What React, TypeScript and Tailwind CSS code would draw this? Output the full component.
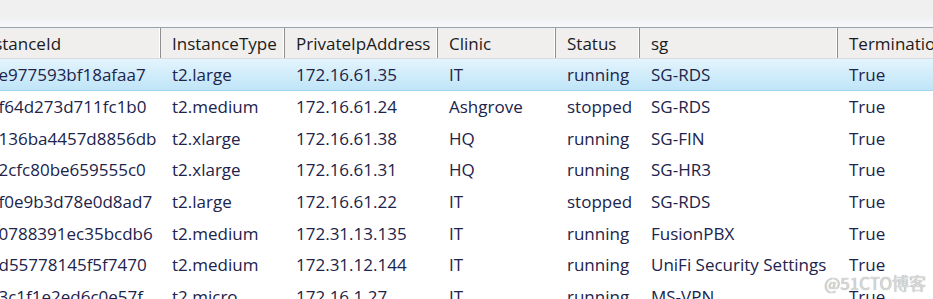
import React from 'react'

const COLS = ['InstanceId', 'InstanceType', 'PrivateIpAddress', 'Clinic', 'Status', 'sg', 'TerminationProtection']

const ROWS = [
  ['i-0e977593bf18afaa7', 't2.large', '172.16.61.35', 'IT', 'running', 'SG-RDS', 'True'],
  ['i-0f64d273d711fc1b0', 't2.medium', '172.16.61.24', 'Ashgrove', 'stopped', 'SG-RDS', 'True'],
  ['i-0136ba4457d8856db', 't2.xlarge', '172.16.61.38', 'HQ', 'running', 'SG-FIN', 'True'],
  ['i-02cfc80be659555c0', 't2.xlarge', '172.16.61.31', 'HQ', 'running', 'SG-HR3', 'True'],
  ['i-0f0e9b3d78e0d8ad7', 't2.large', '172.16.61.22', 'IT', 'stopped', 'SG-RDS', 'True'],
  ['i-00788391ec35bcdb6', 't2.medium', '172.31.13.135', 'IT', 'running', 'FusionPBX', 'True'],
  ['i-0d55778145f5f7470', 't2.medium', '172.31.12.144', 'IT', 'running', 'UniFi Security Settings', 'True'],
  ['i-03c1f1e2ed6c0e57f', 't2.micro', '172.16.1.27', 'IT', 'running', 'MS-VPN', 'True'],
]

const GRID = 'grid grid-cols-[193px_124px_153px_118px_84px_198px_220px]'

export default function App() {
  return (
    <div className="relative w-[933px] h-[299px] overflow-hidden bg-white font-['Open_Sans',sans-serif] text-[17px]">
      {/* window strip above the grid */}
      <div className="h-[28px] bg-gradient-to-b from-[#f0f0f0] from-60% to-[#f6f8fa] border-b border-[#9aa3ad]" />

      <div className="-ml-[32px]">
        {/* header */}
        <div className={`${GRID} h-[31px] bg-[#f0efee] border-b border-[#d6dbe0] text-[#1b1b1b]`}>
          {COLS.map((c) => (
            <div key={c} className="flex items-center pl-[11px] pt-[2px] border-r border-r-[#8f8f8f] shadow-[inset_-1px_0_0_#ffffff] whitespace-nowrap overflow-hidden">
              {c}
            </div>
          ))}
        </div>

        {/* rows */}
        {ROWS.map((r, i) => (
          <div
            key={r[0]}
            className={`${GRID} h-[31.6px] text-[#20234a] ${
              i === 0 ? 'bg-gradient-to-b from-[#e3f4fc] to-[#bfe5f8] border-b border-[#a3d6f3]' : 'bg-white'
            }`}
          >
            {r.map((v, j) => (
              <div key={j} className="flex items-center pl-[11px] pt-[1px] whitespace-nowrap overflow-hidden">
                {v}
              </div>
            ))}
          </div>
        ))}
      </div>

      {/* watermark */}
      <div className="absolute right-[7px] bottom-[8px] text-[17px] leading-none text-[#dadada] font-['Noto_Sans_CJK_SC',sans-serif] [text-shadow:0_0_1px_#8a8a8a]">
        @51CTO博客
      </div>
    </div>
  )
}
